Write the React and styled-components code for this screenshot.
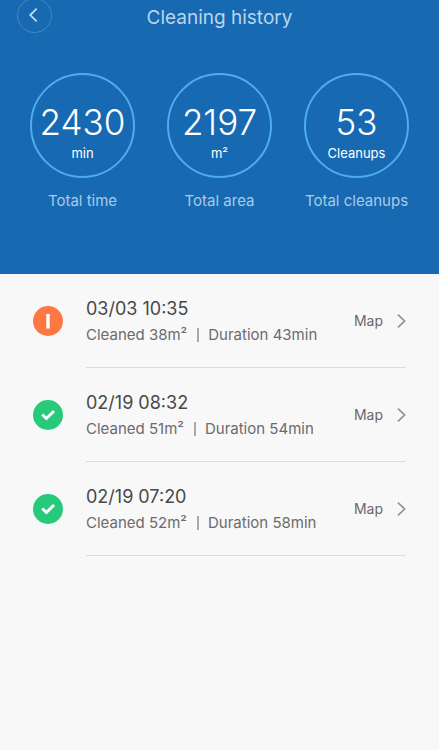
import React from "react";
import styled, { createGlobalStyle } from "styled-components";

const GlobalStyle = createGlobalStyle`
  * {
    box-sizing: border-box;
  }

  body {
    margin: 0;
    background-color: #f8f8f8;
    font-family: Inter, "Liberation Sans", sans-serif;
  }
`

const Header = styled.header`
  background-color: #1769b1;
  padding-bottom: 63px;
  overflow: hidden;
`

const TopBar = styled.div`
  display: grid;
  grid-template-columns: 1fr auto 1fr;
  align-items: center;
  margin-top: -2px;
  padding: 0 17px;
`

const BackButton = styled.button`
  display: flex;
  align-items: center;
  justify-content: center;
  width: 35px;
  height: 35px;
  padding: 0;
  border: 1px solid #4489c5;
  border-radius: 50%;
  background: none;
  color: #c5dcef;
  cursor: pointer;
`

const Title = styled.h1`
  margin: 0;
  padding-top: 4px;
  color: #b9d5ed;
  font-size: 19px;
  font-weight: 400;
  line-height: 24px;
`

const Totals = styled.div`
  display: flex;
  justify-content: space-between;
  padding: 40px 30px 0;
`

const Total = styled.div`
  display: flex;
  flex-direction: column;
  align-items: center;
  width: 105px;
`

const Circle = styled.div`
  display: flex;
  flex-direction: column;
  align-items: center;
  width: 105px;
  height: 105px;
  padding-top: 26px;
  border: 2px solid #4dadee;
  border-radius: 50%;
  color: #ffffff;
`

const Value = styled.span`
  font-size: 35px;
  font-weight: 300;
  line-height: 42px;
`

const Unit = styled.span`
  font-size: 13px;
  line-height: 20px;
`

const Caption = styled.span`
  margin-top: 13px;
  color: #a9cbe8;
  font-size: 15px;
  line-height: 20px;
  white-space: nowrap;
`

const List = styled.ul`
  margin: 0;
  padding: 0 33px;
  list-style: none;
`

const Row = styled.li`
  display: flex;
  align-items: center;
  gap: 23px;
`

const Status = styled.span`
  display: flex;
  flex: none;
  width: 30px;
  height: 30px;
  border-radius: 50%;
  background-color: ${props => props.$done ? "#27c97b" : "#fd7842"};
`

const RowBody = styled.div`
  display: flex;
  flex: 1;
  align-items: center;
  justify-content: space-between;
  height: 94px;
  border-bottom: 1px solid #dcdcdc;
`

const Info = styled.div`
  display: flex;
  flex-direction: column;
  padding-top: 2px;
`

const When = styled.time`
  color: #484848;
  font-size: 18px;
  line-height: 26px;
`

const Details = styled.div`
  display: flex;
  align-items: center;
  color: #6b6b6b;
  font-size: 15px;
  line-height: 26px;
  white-space: nowrap;
`

const Divider = styled.span`
  flex: none;
  width: 2px;
  height: 14px;
  margin: 0 9px 0 10px;
  background-color: #a8a8a8;
`

const MapLink = styled.a`
  display: flex;
  align-items: center;
  gap: 14px;
  color: #686868;
  font-size: 14px;
  line-height: 20px;
  text-decoration: none;
`

const totals = [
  { value: "2430", unit: "min", caption: "Total time" },
  { value: "2197", unit: "m²", caption: "Total area" },
  { value: "53", unit: "Cleanups", caption: "Total cleanups" },
]

const cleanups = [
  { when: "03/03 10:35", area: 38, minutes: 43, done: false },
  { when: "02/19 08:32", area: 51, minutes: 54, done: true },
  { when: "02/19 07:20", area: 52, minutes: 58, done: true },
]

function StatusIcon({ done }) {
  return (
    <Status $done={done} role="img" aria-label={done ? "Completed" : "Interrupted"}>
      <svg width="30" height="30" viewBox="0 0 30 30" fill="none" stroke="#ffffff">
        {done
          ? <path d="M9.3 14.5 L13.4 18.5 L21 11" strokeWidth="3" />
          : <path d="M15 8 V22.5" strokeWidth="3.4" />}
      </svg>
    </Status>
  );
}

function Cleanup({ cleanup }) {
  return (
    <Row>
      <StatusIcon done={cleanup.done} />
      <RowBody>
        <Info>
          <When>{cleanup.when}</When>
          <Details>
            <span>Cleaned {cleanup.area}m²</span>
            <Divider />
            <span>Duration {cleanup.minutes}min</span>
          </Details>
        </Info>
        <MapLink href="#map">
          Map
          <svg width="9" height="14" viewBox="0 0 9 14" fill="none" stroke="#929292" strokeWidth="1.7">
            <path d="M1 0.7 L7.6 7 L1 13.3" />
          </svg>
        </MapLink>
      </RowBody>
    </Row>
  );
}

function App() {
  return (
    <>
      <GlobalStyle />
      <Header>
        <TopBar>
          <BackButton aria-label="Back">
            <svg width="35" height="35" viewBox="0 0 35 35" fill="none" stroke="currentColor" strokeWidth="1.9">
              <path d="M19.8 10.3 L13 17 L19.8 23.7" />
            </svg>
          </BackButton>
          <Title>Cleaning history</Title>
        </TopBar>
        <Totals>
          {totals.map(total => (
            <Total key={total.caption}>
              <Circle>
                <Value>{total.value}</Value>
                <Unit>{total.unit}</Unit>
              </Circle>
              <Caption>{total.caption}</Caption>
            </Total>
          ))}
        </Totals>
      </Header>
      <List>
        {cleanups.map(cleanup => <Cleanup key={cleanup.when} cleanup={cleanup} />)}
      </List>
    </>
  );
}

export default App;
